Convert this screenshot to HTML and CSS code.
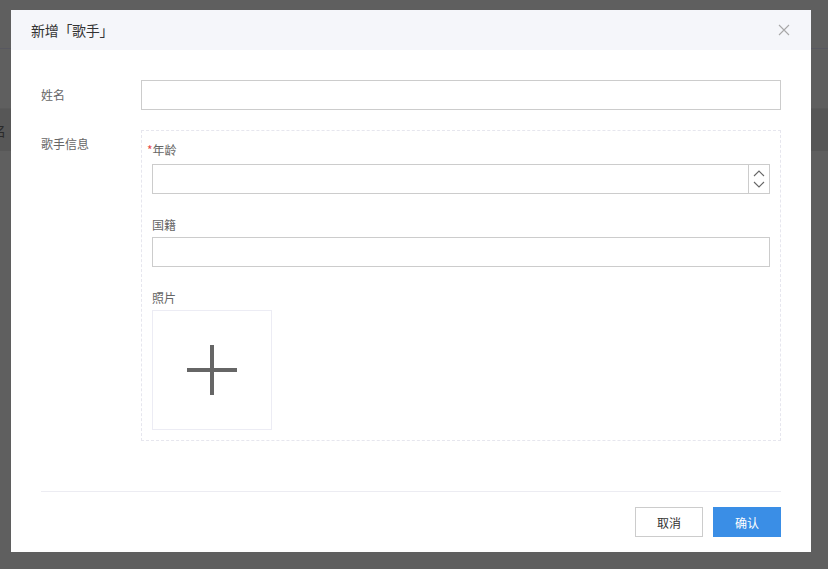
FILE: index.html
```html
<!DOCTYPE html>
<html lang="zh">
<head>
<meta charset="utf-8">
<link rel="stylesheet" href="styles.css">
</head>
<body>
<div class="page">
  <div class="page-top"></div>
  <div class="page-band"><span class="band-text">名</span></div>
</div>
<div class="modal">
  <div class="modal-header">
    <span class="modal-title">新增「歌手」</span>
    <svg class="close" width="12" height="12" viewBox="0 0 12 12"><path d="M1 1L11 11M11 1L1 11" stroke="#a8a8a8" stroke-width="1.1" fill="none"/></svg>
  </div>
  <div class="modal-body">
    <div class="row">
      <div class="label">姓名</div>
      <div class="field"><div class="input"></div></div>
    </div>
    <div class="row">
      <div class="label label-top">歌手信息</div>
      <div class="field">
        <div class="group">
          <div class="sub-label first"><span class="req">*</span>年龄</div>
          <div class="input number">
            <div class="spin">
              <svg width="12" height="8" viewBox="0 0 12 8"><path d="M1 7L6 2L11 7" stroke="#666" stroke-width="1.1" fill="none"/></svg>
              <svg width="12" height="8" viewBox="0 0 12 8"><path d="M1 1L6 6L11 1" stroke="#666" stroke-width="1.1" fill="none"/></svg>
            </div>
          </div>
          <div class="sub-label gap">国籍</div>
          <div class="input"></div>
          <div class="sub-label gap">照片</div>
          <div class="upload">
            <svg width="50" height="50" viewBox="0 0 50 50"><rect x="23" y="0" width="4" height="50" fill="#666"/><rect x="0" y="23" width="50" height="4" fill="#666"/></svg>
          </div>
        </div>
      </div>
    </div>
  </div>
  <div class="modal-footer">
    <button class="btn">取消</button>
    <button class="btn primary">确认</button>
  </div>
</div>
</body>
</html>
```
FILE: styles.css
```css
html, body {
  margin: 0;
  padding: 0;
}
body {
  width: 828px;
  height: 569px;
  background: #5f5f5f;
  font-family: "Noto Sans CJK SC", "Noto Sans", sans-serif;
  overflow: hidden;
  position: relative;
}
.page-top {
  height: 48px;
  border-bottom: 1px solid #585860;
}
.page-band {
  margin-top: 59px;
  height: 42px;
  background: #575757;
  border-top: 1px solid #5a5a5a;
  display: flex;
  align-items: center;
}
.band-text {
  font-size: 14px;
  color: #2a2a2a;
  margin-left: -8px;
}
.modal {
  position: absolute;
  left: 11px;
  top: 10px;
  width: 800px;
  height: 542px;
  background: #fff;
  display: flex;
  flex-direction: column;
}
.modal-header {
  height: 40px;
  background: #f5f6fa;
  display: flex;
  align-items: center;
  justify-content: space-between;
  padding: 0 20px;
}
.modal-title {
  font-size: 14px;
  color: #333;
  letter-spacing: -0.3px;
}
.close {
  margin-right: 1px;
}
.modal-body {
  padding: 30px 30px 0 30px;
  flex: 1;
}
.row {
  display: flex;
  margin-bottom: 20px;
}
.label {
  width: 100px;
  font-size: 12px;
  color: #666;
  line-height: 30px;
}
.label-top {
  line-height: 28px;
}
.field {
  flex: 1;
}
.input {
  height: 28px;
  border: 1px solid #cccccc;
  background: #fff;
}
.number {
  display: flex;
  justify-content: flex-end;
}
.spin {
  width: 20px;
  border-left: 1px solid #cccccc;
  display: flex;
  flex-direction: column;
  align-items: center;
  justify-content: center;
  gap: 4px;
}
.group {
  border: 1px dashed #e6e6ee;
  padding: 8px 10px 10px 10px;
  height: 291px;
}
.sub-label {
  font-size: 12px;
  color: #666;
  line-height: 22px;
  height: 24px;
}
.sub-label.first {
  height: 25px;
}
.sub-label.gap {
  margin-top: 20px;
  height: 22px;
  margin-bottom: 1px;
}
.req {
  color: #e64a4a;
  margin-left: -5px;
  font-size: 12px;
}
.upload {
  width: 118px;
  height: 118px;
  border: 1px solid #ececf4;
  display: flex;
  align-items: center;
  justify-content: center;
}
.modal-footer {
  margin: 0 30px;
  border-top: 1px solid #ececf2;
  padding: 15px 0 15px 0;
  display: flex;
  justify-content: flex-end;
  gap: 10px;
}
.btn {
  width: 68px;
  height: 30px;
  border: 1px solid #cccccc;
  background: #fff;
  font-family: inherit;
  font-size: 12px;
  color: #333;
  padding: 0;
  margin: 0;
}
.btn.primary {
  background: #3a8ee6;
  border-color: #3a8ee6;
  color: #fff;
}
```
